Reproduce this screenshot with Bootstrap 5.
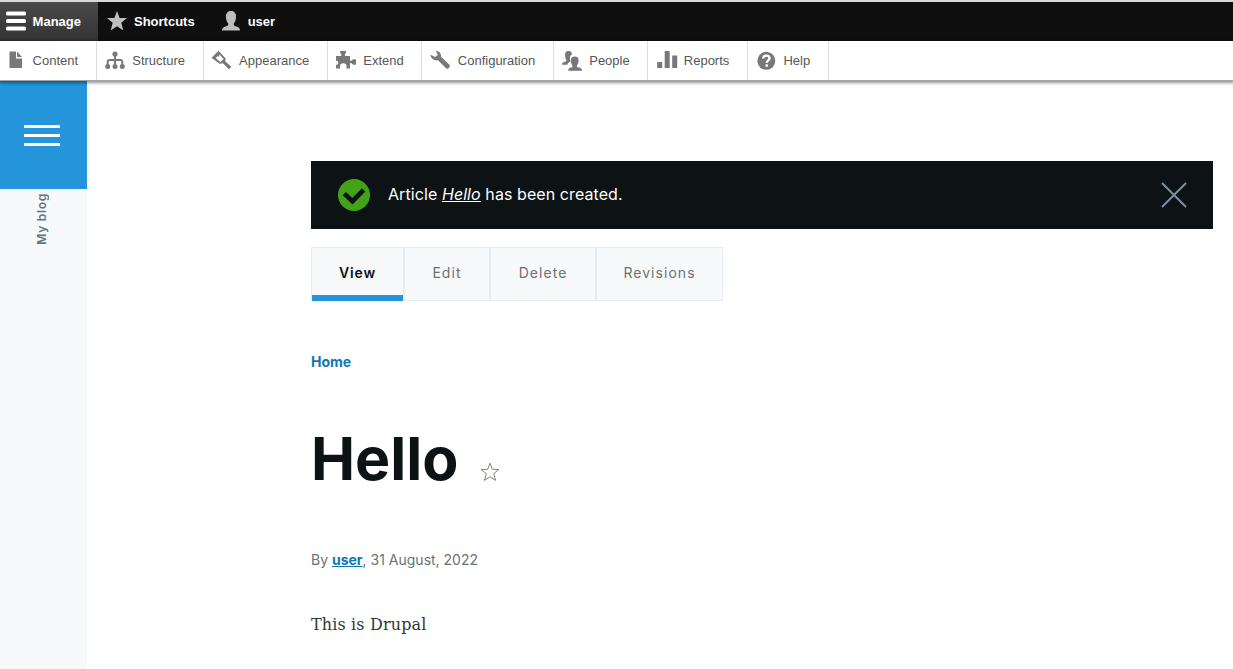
<!DOCTYPE html>
<html lang="en">
<head>
<meta charset="utf-8">
<meta name="viewport" content="width=device-width, initial-scale=1">
<title>Hello | My blog</title>
<link href="https://cdn.jsdelivr.net/npm/bootstrap@5.3.0/dist/css/bootstrap.min.css" rel="stylesheet">
<style>
body{height:669px;overflow:hidden;background:#fff;font-family:"Inter",sans-serif;color:#0d1214}
.topbar{height:41px;background:#0f0f0f;border-top:2px solid #0f0f0f;border-image:linear-gradient(#d9d9d9 50%,#777 50%) 2;font:bold 13px/39px "Liberation Sans",sans-serif}
.topbar a{color:#fff;gap:7px;padding-left:6px}
.topbar a.shortcuts{padding-left:9px}
.topbar a.account{padding-left:26px}
.topbar svg{fill:#bfbfbf;margin-top:-1px}
.topbar .manage{width:98px;background:linear-gradient(#4a4a4a,#333);gap:6.600px}
.topbar .manage svg{fill:#fff}
.tray{position:relative;z-index:2;height:40px;background:#fff;border-bottom:1px solid #a4a4a4;box-shadow:0 1px 3px 1px rgba(0,0,0,.42);font:13px/39px "Liberation Sans",sans-serif}
.tray a{color:#565656;border-right:1px solid #ddd;padding:0 17.600px 0 7.900px;gap:7.600px}
.tray a:first-child{padding-left:5px}
.tray svg{fill:#787878;flex:none;margin-top:-1px}
.sidebar{width:87px;background:#f7f9fa}
.burger{height:108px;background:#2494db;padding:1px 0 0 24px;gap:6px}
.burger i{width:36px;height:3px;background:#fff}
.sitename{writing-mode:vertical-rl;transform:rotate(180deg);font-size:12px;line-height:18px;font-weight:600;letter-spacing:.72px;color:#5d7585;margin:4px 0 0 33px}
.content-area{width:902px;margin-left:224px;padding-top:80px}
.message{height:68px;background:#0d1214;color:#fff;padding:0 26px 0 27px;font-size:16px}
.message a{color:#fff;font-style:italic}
.msg-text{margin:-2px 0 0 18px;letter-spacing:.08px}
.tabs-row{margin-top:18px;height:54px;font-size:14px;letter-spacing:1.05px}
.tabs-row a{color:#6e7172;background:#f7f9fa;border:1px solid #e5ebf0;padding-bottom:3px}
.tabs-row a.current{color:#0d1214;font-weight:600;position:relative;letter-spacing:.8px}
.tabs-row a.current::after{content:"";position:absolute;left:0;right:0;bottom:-1px;height:6px;background:#2494db}
.t1{width:93px}.t2{width:86px}.t3{width:106px}.t4{width:127px}
.blue{color:#0d77b5;font-weight:700}
.crumb{font-size:14px;line-height:20px;margin-top:51px}
.page-title{font-size:59px;line-height:72px;font-weight:700;margin-top:51px;gap:22px;letter-spacing:0}
.page-title svg{margin-top:26px}
.meta-line{font-size:14px;line-height:20px;color:#6e7172;margin-top:55px}
.story{font:16px/27px "DejaVu Serif",serif;letter-spacing:.14px;color:#313637;margin-top:41px}
</style>
</head>
<body class="d-flex flex-column">
<header>
<nav class="topbar d-flex">
  <a href="#" class="manage d-flex align-items-center text-decoration-none"><svg width="20" height="20" viewBox="0 0 20 20"><rect y=".5" width="20" height="4" rx="1.5"/><rect y="8" width="20" height="4" rx="1.5"/><rect y="15.500" width="20" height="4" rx="1.5"/></svg><span>Manage</span></a>
  <a href="#" class="shortcuts d-flex align-items-center text-decoration-none"><svg width="20" height="20" viewBox="0 0 20 20"><path d="M10 0l2.600 7H20l-5.700 4.800 2 7.700L10 15.300 3.700 19.500l2-7.700L0 7h7.400z"/></svg><span>Shortcuts</span></a>
  <a href="#" class="account d-flex align-items-center text-decoration-none"><svg width="20" height="20" viewBox="0 0 20 20"><path d="M1 19.500c0-2.300 1.300-3.300 3.700-4 2.100-.7 3-1.300 2.500-3C5.300 10 5 7.500 5 5.400 5 2 7 0 10 0s5 2 5 5.400c0 2.100-.3 4.600-2.200 7.100-.5 1.700.4 2.300 2.500 3 2.400.7 3.700 1.700 3.700 4z"/></svg><span>user</span></a>
</nav>
<nav class="tray d-flex">
  <a href="#" class="d-flex align-items-center text-decoration-none"><svg width="20" height="20" viewBox="0 0 20 20"><path d="M4.500 1.500h6.500v7h6v9.500H4.500zM12 1.500l5 5.500h-5z"/></svg><span>Content</span></a>
  <a href="#" class="d-flex align-items-center text-decoration-none"><svg width="20" height="20" viewBox="0 0 20 20"><g><circle cx="10" cy="4" r="2.600"/><circle cx="2.700" cy="16.500" r="2.500"/><circle cx="10" cy="16.500" r="2.500"/><circle cx="17.300" cy="16.500" r="2.500"/></g><path d="M10 5v11M2.700 16v-4q0-2 2-2h10.600q2 0 2 2v4" fill="none" stroke="#787878" stroke-width="2"/></svg><span>Structure</span></a>
  <a href="#" class="d-flex align-items-center text-decoration-none"><svg width="20" height="20" viewBox="0 0 20 20"><path fill-rule="evenodd" d="M7.500.8l7.200 7.700-.5 2.800 6 5.500-2.200 2.500-6.100-6.100-3.400.5L.5 7.700zM6.300 6.300L4.800 7.900l4.600 4.400 3.300-3.200-4-4.400-1.500 2.300z"/></svg><span>Appearance</span></a>
  <a href="#" class="d-flex align-items-center text-decoration-none"><svg width="20" height="20" viewBox="0 0 20 20"><path d="M0 6h5.300V4.200C4.200 3.500 3.800 2 4.300 1h5.500c.5 1 .2 2.500-.9 3.200V6H14v3.800c0 1.400.8 1.300 1.800.7.900-1.300 2.400-1.500 4.200-1v5c-1.800.5-3.300.3-4.200-1-1-.6-1.800-.7-1.800.7V18.500h-3.500V16c0-1.700-1.200-2.700-3.200-2.700S4 14.300 4 16v2.500H0V15c1.500 0 2.300-.9 2.300-2.200S1.500 10.800 0 10.800z"/></svg><span>Extend</span></a>
  <a href="#" class="d-flex align-items-center text-decoration-none"><svg width="20" height="20" viewBox="0 0 20 20"><path d="M5.800.8c3.300.2 5.700 2.700 5.200 6l8.200 7.700c1.800 2-.9 5.500-3.200 3.700L8 10.300C4.400 10.900.6 8.700.5 4.800l4.700 2.300 2.600-2.300z"/></svg><span>Configuration</span></a>
  <a href="#" class="d-flex align-items-center text-decoration-none"><svg width="20" height="21" viewBox="0 0 20 21"><path d="M0 14.800c0-2 .9-2.600 2.400-2.900 2-.5 2.200-1.200 1.600-2.300C2.800 7 3 4.800 3.200 3.400 3.600 1.600 5 1 6.500 1c2 0 3.400 1 3.400 3.300-2 1.200-2.700 3.700-1.500 7-1.200 1.700-2.700 1.400-3.100 3.500z"/><path d="M6.300 20.800c0-2.200.9-2.800 2.600-3.200 1.700-.4 2-1.100 1.300-2.300-1.700-2.800-1.500-5-1.100-6.500.4-1.500 1.700-2.300 3.600-2.300s3.200.8 3.600 2.300c.4 1.500.6 3.700-1.100 6.500-.7 1.200-.4 1.900 1.400 2.300 2.200.4 3.400 1 3.400 3.200z"/></svg><span>People</span></a>
  <a href="#" class="d-flex align-items-center text-decoration-none"><svg class="overflow-visible" width="20" height="20" viewBox="0 0 20 20"><path d="M1.200 12h5v6h-5zM8.700 1h5v17h-5zM16.200 5.500h5V18h-5z"/></svg><span>Reports</span></a>
  <a href="#" class="d-flex align-items-center text-decoration-none"><svg width="20" height="20" viewBox="0 0 20 20"><circle cx="10.300" cy="10.800" r="9"/><path d="M7.200 8.500C7.300 6.700 8.500 5.700 10.300 5.700s3.200.9 3.200 2.500c0 2.200-2.800 2.300-2.800 4.800M10.700 14.200v2.600" fill="none" stroke="#fff" stroke-width="2.300"/></svg><span>Help</span></a>
</nav>
</header>
<div class="d-flex flex-grow-1">
  <aside class="sidebar">
    <div class="burger d-flex flex-column justify-content-center"><i></i><i></i><i></i></div>
    <div class="sitename">My blog</div>
  </aside>
  <main class="content-area">
    <div class="message d-flex align-items-center">
      <svg width="32" height="32" viewBox="0 0 32 32"><circle cx="16" cy="16" r="16" fill="#42a318"/><path d="M8 16.200l6.500 6L24 12.500" fill="none" stroke="#0d1214" stroke-width="4.700" stroke-linecap="square" stroke-linejoin="miter"/></svg>
      <span class="msg-text">Article <a href="#">Hello</a> has been created.</span>
      <svg class="ms-auto" width="26" height="26" viewBox="0 0 26 26"><path d="M1 1l24 24M25 1L1 25" stroke="#7b91a3" stroke-width="2"/></svg>
    </div>
    <nav class="tabs-row d-flex">
      <a href="#" class="t1 current d-flex align-items-center justify-content-center text-decoration-none">View</a>
      <a href="#" class="t2 d-flex align-items-center justify-content-center text-decoration-none">Edit</a>
      <a href="#" class="t3 d-flex align-items-center justify-content-center text-decoration-none">Delete</a>
      <a href="#" class="t4 d-flex align-items-center justify-content-center text-decoration-none">Revisions</a>
    </nav>
    <div class="crumb"><a href="#" class="blue text-decoration-none">Home</a></div>
    <h1 class="page-title d-flex align-items-center mb-0"><span>Hello</span><svg width="20" height="20" viewBox="0 0 20 20"><path d="M10 1.200l2.300 6.100 6.500.3-5.100 4 1.900 6.800L10 14.800l-5.600 3.600 1.900-6.800-5.100-4 6.500-.3z" fill="#fff" stroke="#85857a" stroke-width="1"/></svg></h1>
    <div class="meta-line">By <a href="#" class="blue">user</a>, 31 August, 2022</div>
    <p class="story mb-0">This is Drupal</p>
  </main>
</div>
<script src="https://cdn.jsdelivr.net/npm/bootstrap@5.3.0/dist/js/bootstrap.bundle.min.js"></script>
</body>
</html>
